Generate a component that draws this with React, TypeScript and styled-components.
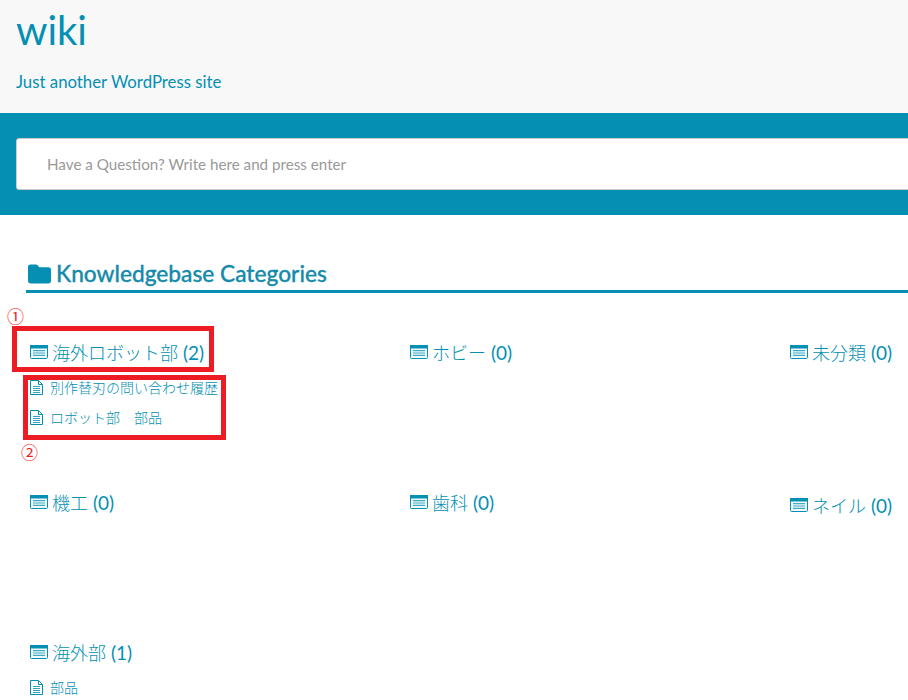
import styled, { createGlobalStyle } from 'styled-components';

const ACCENT = '#048fb3';
const FONT = 'Lato, "Noto Sans CJK JP", sans-serif';

const GlobalStyle = createGlobalStyle`
  html, body {
    margin: 0;
    padding: 0;
    background: #fff;
    overflow: hidden;
  }
  body {
    font-family: ${FONT};
    color: ${ACCENT};
  }
`;

const Page = styled.div`
  position: relative;
  width: 1160px;
  height: 700px;
  overflow: hidden;
`;

const SiteHeader = styled.header`
  height: 113px;
  box-sizing: border-box;
  padding: 5px 16px 0;
  background: #f8f8f8;
`;

const SiteTitle = styled.h1`
  margin: 0;
  font-size: 40px;
  line-height: 50px;
  font-weight: 400;
  color: ${ACCENT};
`;

const Tagline = styled.p`
  margin: 15px 0 0;
  font-size: 16.8px;
  line-height: 24px;
  color: ${ACCENT};
`;

const SearchBand = styled.section`
  height: 102px;
  box-sizing: border-box;
  padding: 25px 16px 0;
  background: ${ACCENT};
`;

const SearchBox = styled.div`
  height: 52px;
  box-sizing: border-box;
  padding-left: 30px;
  display: flex;
  align-items: center;
  background: #fff;
  border: 1px solid #ccc;
  border-radius: 3px;
  font-size: 15.2px;
  color: #999;
`;

const Content = styled.main`
  padding: 43px 0 0 26px;
`;

const SectionTitle = styled.h2`
  margin: 0;
  height: 32px;
  padding-left: 2px;
  display: flex;
  align-items: center;
  gap: 5px;
  border-bottom: 3px solid ${ACCENT};
  font-size: 22.7px;
  line-height: 30px;
  font-weight: 500;
  color: #1a88a8;
  -webkit-text-stroke: 0.3px ${ACCENT};
`;

const Grid = styled.div`
  margin-top: 47px;
  display: grid;
  grid-template-columns: repeat(3, 380px);
  grid-auto-rows: 150px;
  padding-left: 4px;
`;

const Category = styled.div`
  min-width: 0;
`;

const CategoryName = styled.div<{ $drop?: number }>`
  display: flex;
  align-items: center;
  gap: 4px;
  height: 24px;
  margin-top: ${p => p.$drop ?? 0}px;
  font-size: 18px;
  line-height: 24px;
  font-weight: 300;
  color: ${ACCENT};
`;

const CategoryLabel = styled.span`
  padding-top: 1px;
`;

const Count = styled.span`
  font-size: 19px;
  font-weight: 400;
  margin-left: 5px;
`;

const ArticleList = styled.ul`
  margin: 8px 0 0;
  padding: 0;
  list-style: none;
`;

const Article = styled.li`
  display: flex;
  align-items: center;
  gap: 7px;
  height: 30px;
  font-size: 14px;
  font-weight: 300;
  color: ${ACCENT};
`;

const RedBox = styled.div<{ $x: number; $y: number; $w: number; $h: number }>`
  position: absolute;
  left: ${p => p.$x}px;
  top: ${p => p.$y}px;
  width: ${p => p.$w}px;
  height: ${p => p.$h}px;
  box-sizing: border-box;
  border: 5px solid #ed1c24;
`;

const Marker = styled.span<{ $x: number; $y: number }>`
  position: absolute;
  left: ${p => p.$x}px;
  top: ${p => p.$y}px;
  font-family: "Noto Sans CJK JP", sans-serif;
  font-size: 17px;
  line-height: 18px;
  color: #ed1c24;
`;

const FolderIcon = () => (
  <svg width="23" height="20" viewBox="0 0 24 20" aria-hidden="true">
    <path
      fill={ACCENT}
      d="M2.500 0h5.600c1 0 1.700.4 2.300 1.200L11.500 3h9.900A2.600 2.600 0 0 1 24 5.600V17.400A2.600 2.600 0 0 1 21.400 20H2.600A2.600 2.600 0 0 1 0 17.400V2.500A2.500 2.500 0 0 1 2.500 0z"
    />
  </svg>
);

const ListIcon = () => (
  <svg width="18" height="14" viewBox="0 0 18 14" aria-hidden="true">
    <rect x="0.500" y="0.500" width="17" height="13" rx="1" fill="#f2fafc" stroke={ACCENT} />
    <rect x="0" y="0" width="18" height="3.500" fill={ACCENT} />
    <path stroke={ACCENT} strokeOpacity="0.75" strokeWidth="1.200" d="M3 5.600h12M3 8h12M3 10.400h12" />
  </svg>
);

const FileIcon = () => (
  <svg width="13" height="15" viewBox="0 0 13 15" aria-hidden="true">
    <path fill="none" stroke={ACCENT} d="M.5.500h8l4 4v10H.500zM8.500.500v4h4" />
    <path stroke={ACCENT} strokeOpacity="0.8" d="M3 6.500h7M3 8.500h7M3 10.500h7M3 12.500h7" />
  </svg>
);

const categories = [
  { name: '海外ロボット部', count: 2, articles: ['別作替刃の問い合わせ履歴', 'ロボット部\u3000部品'] },
  { name: 'ホビー', count: 0 },
  { name: '未分類', count: 0 },
  { name: '機工', count: 0 },
  { name: '歯科', count: 0 },
  { name: 'ネイル', count: 0, drop: 3 },
  { name: '海外部', count: 1, articles: ['部品'] },
];

export default function App() {
  return (
    <Page>
      <GlobalStyle />
      <SiteHeader>
        <SiteTitle>wiki</SiteTitle>
        <Tagline>Just another WordPress site</Tagline>
      </SiteHeader>
      <SearchBand>
        <SearchBox>Have a Question? Write here and press enter</SearchBox>
      </SearchBand>
      <Content>
        <SectionTitle>
          <FolderIcon />
          Knowledgebase Categories
        </SectionTitle>
        <Grid>
          {categories.map(cat => (
            <Category key={cat.name}>
              <CategoryName $drop={cat.drop}>
                <ListIcon />
                <CategoryLabel>
                  {cat.name}
                  <Count>({cat.count})</Count>
                </CategoryLabel>
              </CategoryName>
              {cat.articles && (
                <ArticleList>
                  {cat.articles.map(title => (
                    <Article key={title}>
                      <FileIcon />
                      {title}
                    </Article>
                  ))}
                </ArticleList>
              )}
            </Category>
          ))}
        </Grid>
      </Content>
      <Marker $x={7} $y={307}>①</Marker>
      <RedBox $x={12} $y={326} $w={202} $h={46} />
      <RedBox $x={23} $y={375} $w={203} $h={65} />
      <Marker $x={21} $y={443}>②</Marker>
    </Page>
  );
}
